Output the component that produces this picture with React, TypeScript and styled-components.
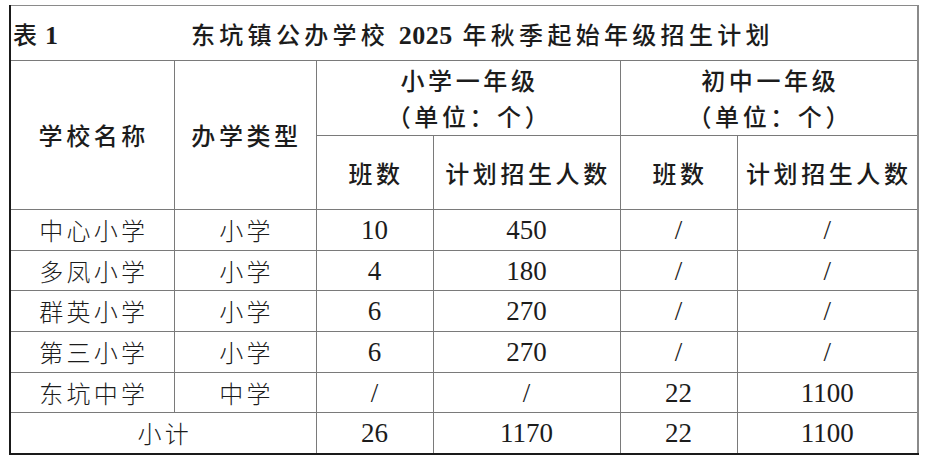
import React from "react"
import styled, { createGlobalStyle } from "styled-components"

const GlobalStyle = createGlobalStyle`
	html, body {
		margin: 0;
		padding: 0;
		background: #ffffff;
	}
	body {
		font-family: "Noto Sans CJK SC", "Noto Sans", sans-serif;
		color: #1c1c1c;
	}
`

const Page = styled.div`
	padding: 5px 0 0 9px;
`

const Table = styled.table`
	border-collapse: collapse;
	table-layout: fixed;
	width: 910px;
	border-left: 2px solid #1a1a1a;
	border-bottom: 2px solid #1a1a1a;
	border-top: 1px solid #8a8a8a;
	border-right: 2px solid #8a8a8a;
`

const TitleCell = styled.td`
	height: 54px;
	padding: 0 0 0 2px;
	border-bottom: 1px solid #7a7a7a;
	font-size: 24px;
	font-weight: 500;
	white-space: nowrap;
	vertical-align: middle;
`

const TableNo = styled.span`
	display: inline-block;
	width: 178px;
	b {
		font-family: "Liberation Serif", serif;
		font-weight: 700;
		font-size: 26px;
		margin-left: 8px;
	}
`

const TitleText = styled.span`
	letter-spacing: 4.3px;
	b {
		font-family: "Liberation Serif", serif;
		font-weight: 700;
		font-size: 26px;
		letter-spacing: 0.5px;
	}
`

const Head = styled.th<{ $h?: number }>`
	height: ${(p) => (p.$h ? `${p.$h}px` : "auto")};
	padding: 0 0 0 3px;
	border: 1px solid #7a7a7a;
	font-size: 24px;
	font-weight: 500;
	letter-spacing: 3.6px;
	line-height: 36px;
	text-align: center;
	vertical-align: middle;
	white-space: nowrap;
`

const Row = styled.tr`
	height: 40.7px;
`

const Cell = styled.td<{ $num?: boolean }>`
	padding: 0 0 0 ${(p) => (p.$num ? 0 : 3)}px;
	border: 1px solid #7a7a7a;
	text-align: center;
	vertical-align: middle;
	white-space: nowrap;
	font-family: ${(p) =>
		p.$num
			? `"Liberation Serif", "Times New Roman", serif`
			: `"Noto Sans CJK SC", sans-serif`};
	font-size: ${(p) => (p.$num ? 27 : 24)}px;
	font-weight: ${(p) => (p.$num ? 400 : 300)};
	letter-spacing: ${(p) => (p.$num ? 0 : 3.2)}px;
	line-height: 30px;
`

type School = {
	name: string
	kind: string
	pClass: string
	pPlan: string
	mClass: string
	mPlan: string
}

const schools: School[] = [
	{ name: "中心小学", kind: "小学", pClass: "10", pPlan: "450", mClass: "/", mPlan: "/" },
	{ name: "多凤小学", kind: "小学", pClass: "4", pPlan: "180", mClass: "/", mPlan: "/" },
	{ name: "群英小学", kind: "小学", pClass: "6", pPlan: "270", mClass: "/", mPlan: "/" },
	{ name: "第三小学", kind: "小学", pClass: "6", pPlan: "270", mClass: "/", mPlan: "/" },
	{ name: "东坑中学", kind: "中学", pClass: "/", pPlan: "/", mClass: "22", mPlan: "1100" },
]

export default function App() {
	return (
		<>
			<GlobalStyle />
			<Page>
				<Table>
					<colgroup>
						<col style={{ width: 164 }} />
						<col style={{ width: 142 }} />
						<col style={{ width: 117 }} />
						<col style={{ width: 187 }} />
						<col style={{ width: 117 }} />
						<col style={{ width: 181 }} />
					</colgroup>
					<tbody>
						<tr>
							<TitleCell colSpan={6}>
								<TableNo>
									表<b>1</b>
								</TableNo>
								<TitleText>
									东坑镇公办学校 <b>2025</b> 年秋季起始年级招生计划
								</TitleText>
							</TitleCell>
						</tr>
						<tr>
							<Head rowSpan={2}>学校名称</Head>
							<Head rowSpan={2}>办学类型</Head>
							<Head colSpan={2} $h={74}>
								小学一年级
								<br />
								（单位：个）
							</Head>
							<Head colSpan={2} $h={74}>
								初中一年级
								<br />
								（单位：个）
							</Head>
						</tr>
						<tr>
							<Head $h={73}>班数</Head>
							<Head $h={73}>计划招生人数</Head>
							<Head $h={73}>班数</Head>
							<Head $h={73}>计划招生人数</Head>
						</tr>
						{schools.map((s) => (
							<Row key={s.name}>
								<Cell>{s.name}</Cell>
								<Cell>{s.kind}</Cell>
								<Cell $num>{s.pClass}</Cell>
								<Cell $num>{s.pPlan}</Cell>
								<Cell $num>{s.mClass}</Cell>
								<Cell $num>{s.mPlan}</Cell>
							</Row>
						))}
						<Row>
							<Cell colSpan={2}>小计</Cell>
							<Cell $num>26</Cell>
							<Cell $num>1170</Cell>
							<Cell $num>22</Cell>
							<Cell $num>1100</Cell>
						</Row>
					</tbody>
				</Table>
			</Page>
		</>
	)
}
